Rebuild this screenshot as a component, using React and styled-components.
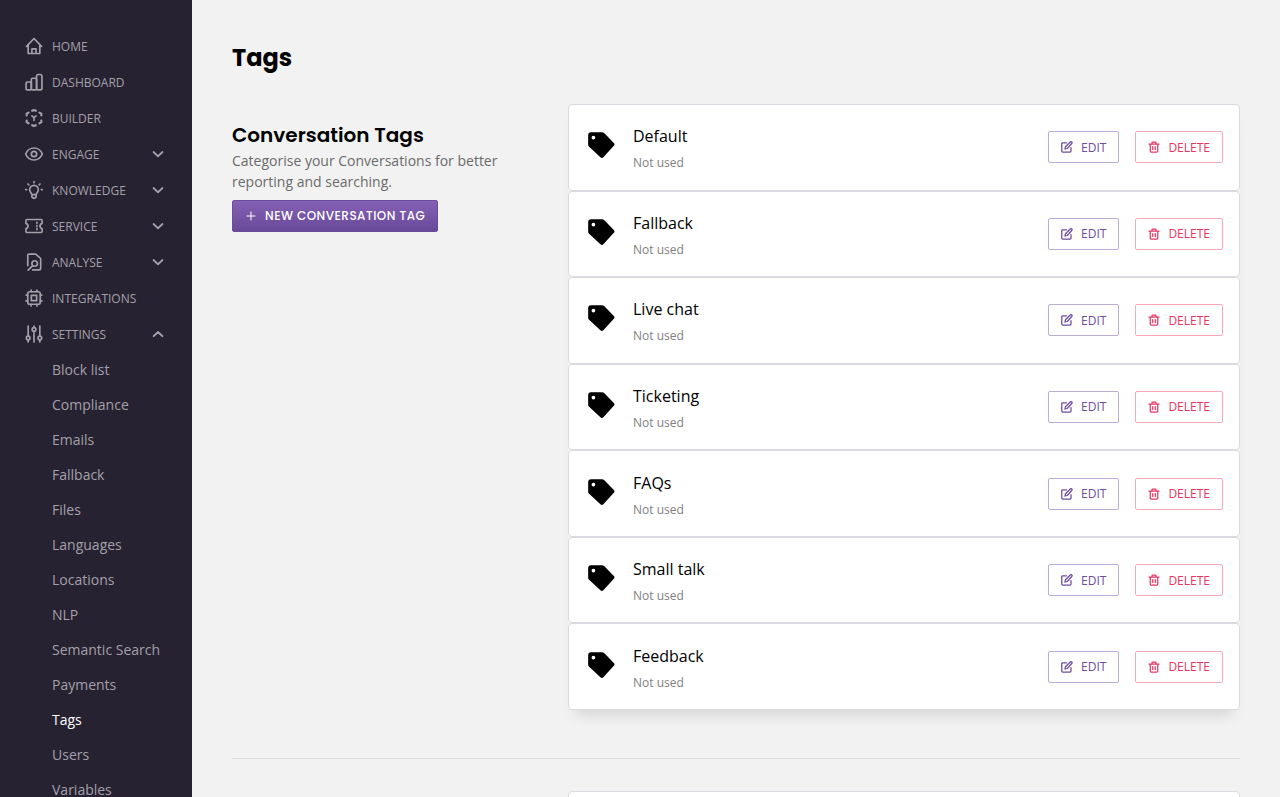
import React from 'react'
import styled, {createGlobalStyle, css} from 'styled-components'

const GlobalStyle = createGlobalStyle`
    *, *::before, *::after {
        box-sizing: border-box;
    }

    body {
        margin: 0;
        background: #f2f2f2;
        color: #000;
        font-family: 'Open Sans', 'Noto Sans', sans-serif;
        font-size: 14px;
        overflow-x: hidden;
    }

    h1, h2, h3, p, ul {
        margin: 0;
        padding: 0;
    }

    ul {
        list-style: none;
    }
`

const heading = css`
    font-family: Poppins, Inter, sans-serif;
    font-weight: 700;
    line-height: 30px;
`

const Layout = styled.div`
    display: flex;
    height: 100vh;
    overflow: hidden;
`

const Sidebar = styled.nav`
    flex: 0 0 192px;
    padding: 28px 24px 0;
    background: #272231;
    overflow: hidden;
`

const NavButton = styled.button`
    display: flex;
    align-items: center;
    width: 100%;
    height: 36px;
    padding: 0 4px 0 0;
    border: 0;
    background: none;
    color: #a3a0a9;
    font-family: inherit;
    font-size: 12px;
    text-align: left;
    text-transform: uppercase;
    cursor: pointer;
`

const NavLabel = styled.span`
    flex: 1;
    padding-left: 8px;
`

const SubLink = styled.a`
    display: block;
    padding-left: 28px;
    color: ${({$active}) => $active ? '#fff' : '#a3a0a9'};
    line-height: 35px;
    text-decoration: none;
    white-space: nowrap;
`

const Icon = styled.svg`
    flex: none;
    width: ${({$size}) => $size}px;
    height: ${({$size}) => $size}px;
    fill: none;
    stroke: currentColor;
    stroke-linecap: round;
    stroke-linejoin: round;
`

const Main = styled.main`
    flex: 1;
    min-width: 0;
    padding: 43px 40px 0;
    overflow: hidden;
`

const PageTitle = styled.h1`
    ${heading}
    font-size: 24px;
`

const Section = styled.section`
    display: grid;
    grid-template-columns: 1fr 2fr;
    padding: ${({$first}) => $first ? '31px 0 48px' : '32px 0'};

    & + & {
        border-top: 1px solid #dedfe1;
    }
`

const Intro = styled.div`
    padding-top: 16px;
    padding-right: 40px;
`

const SectionTitle = styled.h2`
    ${heading}
    font-size: 20px;
    font-weight: 600;
`

const Description = styled.p`
    color: #6b6b6b;
    line-height: 21px;
`

const NewButton = styled.button`
    display: flex;
    align-items: center;
    gap: 8px;
    height: 32px;
    margin-top: 8px;
    padding: 0 12px;
    border: 1px solid #6a4c9c;
    border-radius: 2px;
    background: linear-gradient(#8460b4, #694a99);
    color: #fff;
    font-family: Poppins, Inter, sans-serif;
    font-size: 12px;
    font-weight: 500;
    letter-spacing: 0.04em;
    text-transform: uppercase;
    white-space: nowrap;
    cursor: pointer;
`

const TagList = styled.ul`
    display: grid;
    grid-auto-rows: 1fr;
    min-height: 606px;
    border-radius: 4px;
    box-shadow: 0 12px 14px -8px rgba(0, 0, 0, 0.14);
`

const TagRow = styled.li`
    display: flex;
    align-items: center;
    min-height: 86px;
    padding: 0 16px;
    border: 1px solid #dadbe0;
    border-radius: 4px;
    background: #fff;
`

const TagIcon = styled.div`
    display: flex;
    padding: 0 2px 4px;
`

const TagText = styled.div`
    flex: 1;
    padding-top: 4px;
    padding-left: 16px;
`

const TagName = styled.h3`
    font-size: 16px;
    font-weight: 400;
    line-height: 26px;
`

const TagUsage = styled.p`
    padding-top: 2px;
    color: #808080;
    font-size: 12px;
    line-height: 24px;
`

const Actions = styled.div`
    display: flex;
    gap: 16px;
`

const ActionButton = styled.button`
    display: flex;
    align-items: center;
    gap: 8px;
    height: 32px;
    padding: 0 12px;
    border: 1px solid ${({$danger}) => $danger ? '#f9a8b8' : '#bbaed6'};
    border-radius: 2px;
    background: #fff;
    color: ${({$danger}) => $danger ? '#e63560' : '#6b4c9f'};
    font-family: inherit;
    font-size: 12px;
    font-weight: 500;
    text-transform: uppercase;
    cursor: pointer;
`

const icons = {
    home: <path d="M3 12.500 12 3l9 9.500M5 10.500V21h14V10.500M9.500 21v-5.500h5V21"/>,
    dashboard: (
        <>
            <rect x="2.500" y="12" width="6.300" height="9.500" rx="1.500"/>
            <rect x="8.800" y="7.500" width="6.300" height="14" rx="1.500"/>
            <rect x="15.100" y="3" width="6.400" height="18.500" rx="2"/>
        </>
    ),
    builder: (
        <>
            <path d="M9.800 3.300 12 2.300l2.200 1M5.500 5.500 3.200 6.800V9M3.200 15V17l2.300 1.300M18.500 5.500l2.300 1.300V9M20.800 15V17l-2.300 1.300M9.800 20.700l2.200 1 2.200-1" strokeWidth="2.600"/>
            <path d="m9.500 9.500 2.500 2 2.500-2M12 11.500v3.500"/>
        </>
    ),
    engage: (
        <>
            <path d="M2 12c2-4.800 5.500-7.200 10-7.200s8 2.400 10 7.200c-2 4.800-5.500 7.200-10 7.200S4 16.800 2 12Z"/>
            <circle cx="12" cy="12" r="3.200"/>
        </>
    ),
    knowledge: (
        <>
            <path d="M9.500 17.500c-.3-1.700-2.700-2.800-2.700-5.800a5.200 5.200 0 0 1 10.400 0c0 3-2.400 4.100-2.700 5.800ZM9.500 17.500v3l1.500 1.300h2l1.500-1.300v-3"/>
            <path d="M12 2v1.300M4.800 4.800l1 1M19.200 4.800l-1 1M2 11.500h1.200M20.800 11.500H22"/>
        </>
    ),
    service: (
        <>
            <path d="M3.500 4.200h17a1.200 1.200 0 0 1 1.200 1.200v3.400a3.300 3.300 0 0 0 0 6.400v3.400a1.200 1.200 0 0 1-1.200 1.200h-17a1.200 1.200 0 0 1-1.200-1.200v-3.400a3.300 3.300 0 0 0 0-6.400V5.400a1.200 1.200 0 0 1 1.200-1.200Z"/>
            <path d="M15.500 7.500v1.300M15.500 11.500v1M15.500 15.200v1.300"/>
        </>
    ),
    analyse: (
        <>
            <path d="M4.500 16.500V4A1.500 1.500 0 0 1 6 2.500h8l6 5.300V19.500a2 2 0 0 1-2 2h-7.500"/>
            <circle cx="12.800" cy="13.800" r="3.300"/>
            <path d="m10.500 16.300-5.500 5.500"/>
        </>
    ),
    integrations: (
        <>
            <rect x="4.500" y="4.500" width="15" height="15" rx="2.500"/>
            <rect x="8.800" y="8.800" width="6.400" height="6.400"/>
            <path d="M8.500 4.500v-2M15.500 4.500v-2M8.500 21.500v-2M15.500 21.500v-2M4.500 8.500h-2M4.500 15.500h-2M21.500 8.500h-2M21.500 15.500h-2"/>
        </>
    ),
    settings: (
        <>
            <path d="M5 2.500v12M5 19v2.500M12 2.500v1.800M12 8.800v12.700M19 2.500v12M19 19v2.500"/>
            <circle cx="5" cy="16.800" r="2.200"/>
            <circle cx="12" cy="6.500" r="2.200"/>
            <circle cx="19" cy="16.800" r="2.200"/>
        </>
    ),
    down: <path d="m3 8 9 8.500L21 8"/>,
    up: <path d="m3 16.500 9-8.500 9 8.500"/>,
    plus: <path d="M12 4v16M4 12h16"/>,
    edit: (
        <>
            <path d="M11 3.500H3.500a2 2 0 0 0-2 2V20a2 2 0 0 0 2 2H18a2 2 0 0 0 2-2v-7"/>
            <path d="m8 16 1-4.500L18.500 2a2.100 2.100 0 0 1 3 3L12.500 15 8 16Z"/>
        </>
    ),
    trash: <path d="M2 6h20M4.500 6v14a2 2 0 0 0 2 2h11a2 2 0 0 0 2-2V6M8 6V3.500A1.500 1.500 0 0 1 9.500 2h5A1.500 1.500 0 0 1 16 3.500V6M9.500 11v6M14.500 11v6"/>,
    tag: <path d="M3.500 1h9.200c.8 0 1.400.3 2 .8l8.300 8.400c.8.800.8 1.700 0 2.500L14 22.500c-.8.800-1.700.8-2.500 0L1.800 13.600C1.300 13 1 12.400 1 11.700V3.500A2.500 2.500 0 0 1 3.500 1ZM5.500 4a1.600 1.600 0 1 0 0 3.200 1.600 1.600 0 0 0 0-3.200Z" fill="currentColor" fillRule="evenodd" stroke="none"/>
}

const Glyph = ({name, size = 20, weight = 2}) => (
    <Icon $size={size} viewBox="0 0 24 24" strokeWidth={weight} aria-hidden="true">{icons[name]}</Icon>
)

const menu = [
    {label: 'Home', icon: 'home'},
    {label: 'Dashboard', icon: 'dashboard'},
    {label: 'Builder', icon: 'builder'},
    {label: 'Engage', icon: 'engage', arrow: 'down'},
    {label: 'Knowledge', icon: 'knowledge', arrow: 'down'},
    {label: 'Service', icon: 'service', arrow: 'down'},
    {label: 'Analyse', icon: 'analyse', arrow: 'down'},
    {label: 'Integrations', icon: 'integrations'},
    {label: 'Settings', icon: 'settings', arrow: 'up'}
]

const settings = [
    'Block list', 'Compliance', 'Emails', 'Fallback', 'Files', 'Languages', 'Locations',
    'NLP', 'Semantic Search', 'Payments', 'Tags', 'Users', 'Variables'
]

const tags = ['Default', 'Fallback', 'Live chat', 'Ticketing', 'FAQs', 'Small talk', 'Feedback']

const App = () => (
    <Layout>
        <GlobalStyle/>
        <Sidebar>
            {menu.map(({label, icon, arrow}) => (
                <NavButton key={label} type="button">
                    <Glyph name={icon}/>
                    <NavLabel>{label}</NavLabel>
                    {arrow && <Glyph name={arrow} size={12} weight={3.5}/>}
                </NavButton>
            ))}
            {settings.map(name => (
                <SubLink key={name} href="#" $active={name === 'Tags'}>{name}</SubLink>
            ))}
        </Sidebar>
        <Main>
            <PageTitle>Tags</PageTitle>
            <Section $first>
                <Intro>
                    <SectionTitle>Conversation Tags</SectionTitle>
                    <Description>Categorise your Conversations for better reporting and searching.</Description>
                    <NewButton type="button">
                        <Glyph name="plus" size={12}/>
                        New conversation tag
                    </NewButton>
                </Intro>
                <TagList>
                    {tags.map(name => (
                        <TagRow key={name}>
                            <TagIcon><Glyph name="tag" size={28}/></TagIcon>
                            <TagText>
                                <TagName>{name}</TagName>
                                <TagUsage>Not used</TagUsage>
                            </TagText>
                            <Actions>
                                <ActionButton type="button">
                                    <Glyph name="edit" size={12} weight={2.5}/>
                                    Edit
                                </ActionButton>
                                <ActionButton type="button" $danger>
                                    <Glyph name="trash" size={12} weight={2.5}/>
                                    Delete
                                </ActionButton>
                            </Actions>
                        </TagRow>
                    ))}
                </TagList>
            </Section>
            <Section>
                <Intro/>
                <TagRow as="div"/>
            </Section>
        </Main>
    </Layout>
)

export default App
